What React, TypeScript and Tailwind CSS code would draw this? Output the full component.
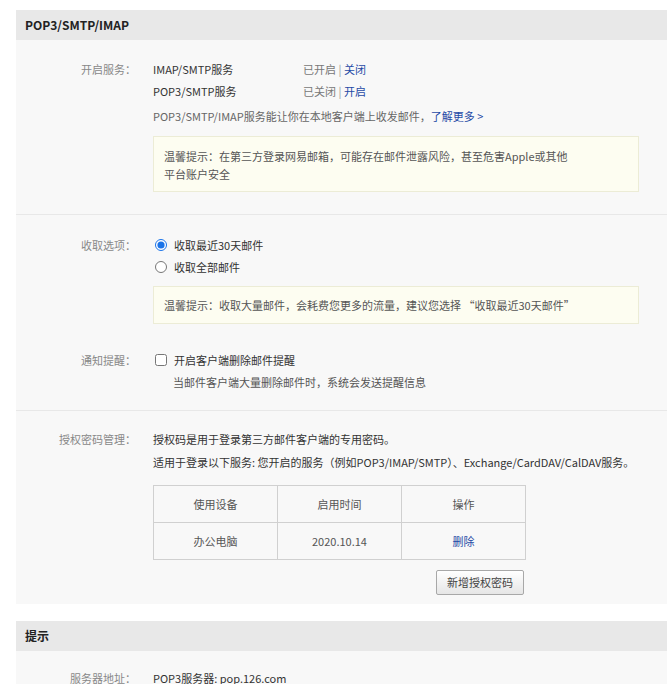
import React from "react";

function Label({ children }: { children: React.ReactNode }) {
  return (
    <div className="w-[120px] shrink-0 text-right text-[#888] leading-[22px]">
      {children}
    </div>
  );
}

function Row({ label, children }: { label: string; children: React.ReactNode }) {
  return (
    <div className="flex gap-[17px]">
      <Label>{label}</Label>
      <div className="flex-1 min-w-0">{children}</div>
    </div>
  );
}

function Tip({ children, className = "" }: { children: React.ReactNode; className?: string }) {
  return (
    <div
      className={
        "w-[486px] bg-[#fdfdf1] border border-[#ececd6] text-[#555] leading-[18px] pl-[10px] " +
        className
      }
    >
      {children}
    </div>
  );
}

export default function App() {
  return (
    <div className="min-h-[684px] bg-white pt-[10px] pl-4 text-[11px] text-[#333] font-['Noto_Sans_CJK_SC',sans-serif]">
      {/* Section 1 */}
      <div className="h-[30px] bg-[#e8e8e8] flex items-center pl-[9px] font-bold text-[12px] text-[#222]">
        POP3/SMTP/IMAP
      </div>
      <div className="bg-[#f8f8f8]">
        <div className="pt-[18px] pb-[22px] border-b border-[#e8e8e8]">
          <Row label="开启服务：">
            <div className="leading-[22px]">
              <div className="flex">
                <span className="w-[150px]">IMAP/SMTP服务</span>
                <span className="text-[#777]">
                  已开启 <span className="text-[#999]">|</span>{" "}
                  <a className="text-[#1f4aa6] cursor-pointer">关闭</a>
                </span>
              </div>
              <div className="flex">
                <span className="w-[150px]">POP3/SMTP服务</span>
                <span className="text-[#777]">
                  已关闭 <span className="text-[#999]">|</span>{" "}
                  <a className="text-[#1f4aa6] cursor-pointer">开启</a>
                </span>
              </div>
              <div className="mt-[3px] text-[#666]">
                POP3/SMTP/IMAP服务能让你在本地客户端上收发邮件，
                <a className="text-[#1f4aa6] cursor-pointer">了解更多 &gt;</a>
              </div>
            </div>
            <Tip className="mt-[9px] pt-[10px] pb-[9px] h-[56px]">
              温馨提示：在第三方登录网易邮箱，可能存在邮件泄露风险，甚至危害Apple或其他
              <br />
              平台账户安全
            </Tip>
          </Row>
        </div>

        <div className="pt-[19px] pb-[17px] border-b border-[#e8e8e8]">
          <Row label="收取选项：">
            <div className="leading-[22px]">
              <label className="flex items-center h-[22px]">
                <input
                  type="radio"
                  name="recv"
                  defaultChecked
                  className="m-0 ml-[2px] w-[12px] h-[12px] accent-[#1a73e8]"
                />
                <span className="ml-[7px]">收取最近30天邮件</span>
              </label>
              <label className="flex items-center h-[22px]">
                <input
                  type="radio"
                  name="recv"
                  className="m-0 ml-[2px] w-[12px] h-[12px] accent-[#1a73e8]"
                />
                <span className="ml-[7px]">收取全部邮件</span>
              </label>
            </div>
            <Tip className="mt-[8px] h-[38px] flex items-center">
              温馨提示：收取大量邮件，会耗费您更多的流量，建议您选择 “收取最近30天邮件”
            </Tip>
          </Row>
          <div className="mt-[25px]">
            <Row label="通知提醒：">
              <div className="leading-[22px]">
                <label className="flex items-center h-[22px]">
                  <input
                    type="checkbox"
                    className="m-0 ml-[2px] w-[12px] h-[12px] accent-[#1a73e8]"
                  />
                  <span className="ml-[7px]">开启客户端删除邮件提醒</span>
                </label>
                <div className="pl-[20px] text-[#555]">当邮件客户端大量删除邮件时，系统会发送提醒信息</div>
              </div>
            </Row>
          </div>
        </div>

        <div className="pt-[17px] pb-[9px]">
          <Row label="授权密码管理：">
            <div className="leading-[22px] whitespace-nowrap">
              <div className="h-[23px]">授权码是用于登录第三方邮件客户端的专用密码。</div>
              <div>
                适用于登录以下服务: 您开启的服务（例如POP3/IMAP/SMTP）、Exchange/CardDAV/CalDAV服务。
              </div>
            </div>
            <div className="w-[373px] mt-[12px]">
              <table className="border-collapse text-center text-[#555]">
                <tbody>
                  <tr>
                    <td className="w-[124px] h-[37px] border border-[#d0d0d0]">使用设备</td>
                    <td className="w-[124px] h-[37px] border border-[#d0d0d0]">启用时间</td>
                    <td className="w-[124px] h-[37px] border border-[#d0d0d0]">操作</td>
                  </tr>
                  <tr>
                    <td className="w-[124px] h-[37px] border border-[#d0d0d0]">办公电脑</td>
                    <td className="w-[124px] h-[37px] border border-[#d0d0d0]">2020.10.14</td>
                    <td className="w-[124px] h-[37px] border border-[#d0d0d0]">
                      <a className="text-[#1f4aa6] cursor-pointer">删除</a>
                    </td>
                  </tr>
                </tbody>
              </table>
              <div className="flex justify-end mt-[10px] pr-[2px]">
                <button className="w-[88px] h-[25px] rounded-[2px] border border-[#a8a8a8] bg-gradient-to-b from-white to-[#e6e6e6] text-[#444] text-[11px]">
                  新增授权密码
                </button>
              </div>
            </div>
          </Row>
        </div>
      </div>

      {/* Section 2 */}
      <div className="h-[30px] mt-[17px] bg-[#e8e8e8] flex items-center pl-[9px] font-bold text-[12px] text-[#222]">
        提示
      </div>
      <div className="bg-[#f8f8f8] pt-[16px] pb-[10px]">
        <Row label="服务器地址：">
          <div className="leading-[22px]">POP3服务器: pop.126.com</div>
        </Row>
      </div>
    </div>
  );
}
